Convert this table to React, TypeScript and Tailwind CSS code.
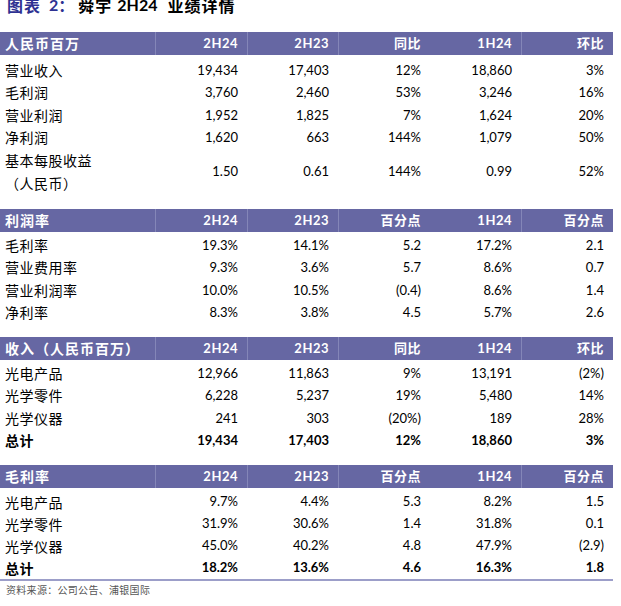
const cn = "font-['Noto_Sans_CJK_SC',sans-serif]";
const num = "font-['Lato','Noto_Sans_CJK_SC',sans-serif]";

type Row = { label: string; values: string[]; bold?: boolean };

type Section = {
  head: string[];
  rows: Row[];
  pad: string;
  rowH: string;
};

const grid = "grid grid-cols-[155px_92px_91px_92px_91px_92px] w-[613px]";

function Header({ cells }: { cells: string[] }) {
  return (
    <div className={`${grid} h-[23px] bg-[#6667a3] text-white`}>
      {cells.map((c, i) => (
        <div
          key={i}
          className={
            i === 0
              ? `${cn} flex items-center pl-[5px] text-[14px] font-bold tracking-[1px]`
              : `${num} flex items-center justify-end pr-[9px] text-[13px] font-bold tracking-[0.5px] ${
                  i === 4 ? "" : "border-l border-[#8486b8]"
                }`
          }
        >
          {c}
        </div>
      ))}
    </div>
  );
}

function Rows({ rows, rowH }: { rows: Row[]; rowH: string }) {
  return (
    <>
      {rows.map((r) => (
        <div key={r.label} className={`${grid} ${rowH} text-black`}>
          <div
            className={`${cn} flex items-center pl-[5px] text-[14px] tracking-[0.5px] ${
              r.bold ? "font-bold" : "font-normal"
            }`}
          >
            {r.label}
          </div>
          {r.values.map((v, i) => (
            <div
              key={i}
              className={`${num} flex items-center justify-end pr-[9px] text-[13px] ${
                r.bold ? "font-bold" : ""
              }`}
            >
              {v}
            </div>
          ))}
        </div>
      ))}
    </>
  );
}

const sections: Section[] = [
  {
    head: ["利润率", "2H24", "2H23", "百分点", "1H24", "百分点"],
    pad: "pt-[2px] mb-[13px]",
    rowH: "h-[22.5px]",
    rows: [
      { label: "毛利率", values: ["19.3%", "14.1%", "5.2", "17.2%", "2.1"] },
      { label: "营业费用率", values: ["9.3%", "3.6%", "5.7", "8.6%", "0.7"] },
      { label: "营业利润率", values: ["10.0%", "10.5%", "(0.4)", "8.6%", "1.4"] },
      { label: "净利率", values: ["8.3%", "3.8%", "4.5", "5.7%", "2.6"] },
    ],
  },
  {
    head: ["收入（人民币百万）", "2H24", "2H23", "同比", "1H24", "环比"],
    pad: "pt-[2px] mb-[13px]",
    rowH: "h-[22.5px]",
    rows: [
      { label: "光电产品", values: ["12,966", "11,863", "9%", "13,191", "(2%)"] },
      { label: "光学零件", values: ["6,228", "5,237", "19%", "5,480", "14%"] },
      { label: "光学仪器", values: ["241", "303", "(20%)", "189", "28%"] },
      { label: "总计", values: ["19,434", "17,403", "12%", "18,860", "3%"], bold: true },
    ],
  },
];

export default function App() {
  return (
    <div className="w-[621px] h-[606px] bg-white overflow-hidden">
      <div className="h-[35px] -mt-[3px] pl-[7px] flex items-start text-[16px] leading-[16px] font-bold">
        <span className={`${cn} text-[#2e3192] tracking-[1px]`}>图表</span>
        <span className={`${num} text-[#2e3192] ml-[8px]`}>2</span>
        <span className={`${cn} text-[#2e3192]`}>：</span>
        <span className={`${cn} text-black tracking-[1px] ml-[4px]`}>舜宇</span>
        <span className={`${num} text-black ml-[5px]`}>2H24</span>
        <span className={`${cn} text-black tracking-[1px] ml-[10px]`}>业绩详情</span>
      </div>

      <Header cells={["人民币百万", "2H24", "2H23", "同比", "1H24", "环比"]} />
      <div className="pt-[4px] mb-[15px]">
        <Rows
          rowH="h-[22.5px]"
          rows={[
            { label: "营业收入", values: ["19,434", "17,403", "12%", "18,860", "3%"] },
            { label: "毛利润", values: ["3,760", "2,460", "53%", "3,246", "16%"] },
            { label: "营业利润", values: ["1,952", "1,825", "7%", "1,624", "20%"] },
            { label: "净利润", values: ["1,620", "663", "144%", "1,079", "50%"] },
          ]}
        />
        <div className={`${grid} h-[45px] text-black`}>
          <div className={`${cn} flex flex-col justify-center pl-[5px] text-[14px] leading-[23px] tracking-[0.5px]`}>
            <span>基本每股收益</span>
            <span>（人民币）</span>
          </div>
          {["1.50", "0.61", "144%", "0.99", "52%"].map((v, i) => (
            <div key={i} className={`${num} flex items-center justify-end pr-[9px] text-[13px]`}>
              {v}
            </div>
          ))}
        </div>
      </div>

      {sections.map((s) => (
        <div key={s.head[0]}>
          <Header cells={s.head} />
          <div className={s.pad}>
            <Rows rows={s.rows} rowH={s.rowH} />
          </div>
        </div>
      ))}

      <Header cells={["毛利率", "2H24", "2H23", "百分点", "1H24", "百分点"]} />
      <div className="pt-[3px] w-[613px] border-b-2 border-[#9c9ec9]">
        <Rows
          rowH="h-[22px]"
          rows={[
            { label: "光电产品", values: ["9.7%", "4.4%", "5.3", "8.2%", "1.5"] },
            { label: "光学零件", values: ["31.9%", "30.6%", "1.4", "31.8%", "0.1"] },
            { label: "光学仪器", values: ["45.0%", "40.2%", "4.8", "47.9%", "(2.9)"] },
            { label: "总计", values: ["18.2%", "13.6%", "4.6", "16.3%", "1.8"], bold: true },
          ]}
        />
      </div>
      <div className={`${cn} pl-[6px] pt-[2px] text-[10px] leading-[14px] tracking-[0.3px] text-[#555]`}>
        资料来源：公司公告、浦银国际
      </div>
    </div>
  );
}
